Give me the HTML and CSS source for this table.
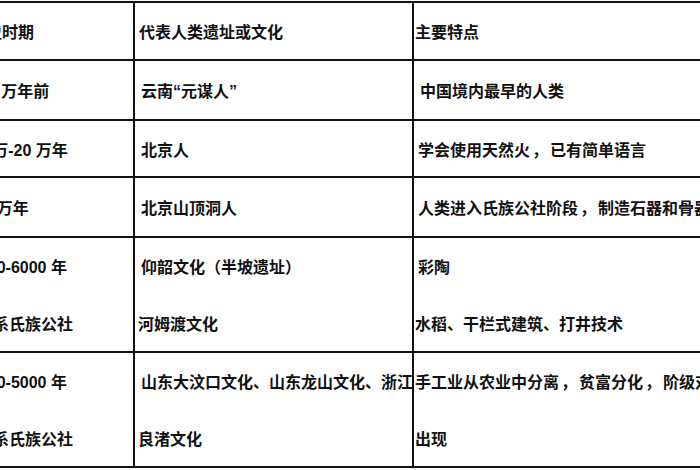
FILE: index.html
```html
<!DOCTYPE html>
<html lang="zh-CN">
<head>
<meta charset="utf-8">
<title>中国史前文化</title>
<link rel="stylesheet" href="styles.css">
</head>
<body>
<div class="sheet">
  <div class="cell c1">历史时期</div>
  <div class="cell c2 head">代表人类遗址或文化</div>
  <div class="cell c3 head">主要特点</div>

  <div class="cell c1">170 万年前</div>
  <div class="cell c2">云南“元谋人”</div>
  <div class="cell c3 wide">中国境内最早的人类</div>

  <div class="cell c1">70 万-20 万年</div>
  <div class="cell c2">北京人</div>
  <div class="cell c3">学会使用天然火<span class="comma">，</span>已有简单语言</div>

  <div class="cell c1">1.8 万年</div>
  <div class="cell c2">北京山顶洞人</div>
  <div class="cell c3">人类进入氏族公社阶段<span class="comma">，</span>制造石器和骨器</div>

  <div class="cell c1 two"><span class="ln">7000-6000 年</span><span class="ln indent">母系氏族公社</span></div>
  <div class="cell c2 two"><span class="ln">仰韶文化（半坡遗址）</span><span class="ln tight">河姆渡文化</span></div>
  <div class="cell c3 two"><span class="ln">彩陶</span><span class="ln tight">水稻、干栏式建筑、打井技术</span></div>

  <div class="cell c1 two"><span class="ln">6000-5000 年</span><span class="ln indent">父系氏族公社</span></div>
  <div class="cell c2 two"><span class="ln">山东大汶口文化、山东龙山文化、浙江</span><span class="ln tight">良渚文化</span></div>
  <div class="cell c3 two"><span class="ln tight">手工业从农业中分离<span class="comma">，</span>贫富分化<span class="comma">，</span>阶级对立</span><span class="ln tight">出现</span></div>
</div>
</body>
</html>
```

FILE: styles.css
```css
html, body {
  margin: 0;
  padding: 0;
  background: #fff;
  overflow: hidden;
}

body {
  width: 700px;
  height: 470px;
  font-family: "Liberation Sans", "Noto Sans CJK SC", sans-serif;
  font-weight: bold;
  font-size: 16px;
  color: #111;
}

.sheet {
  display: grid;
  grid-template-columns: 171px 277px 420px;
  grid-template-rows: 56px 58px 55px 58px 113px 113px;
  gap: 2px;
  padding: 2px;
  background: #111;
  margin: 1px 0 0 -40px;
  width: max-content;
}

.cell {
  background: #fff;
  display: flex;
  align-items: center;
  white-space: nowrap;
  overflow: hidden;
}

.c1 { padding-left: 8px; }
.c2 { padding-left: 6px; }
.c3 { padding-left: 4px; }
.head.c2 { padding-left: 4px; }
.head.c3 { padding-left: 1px; }
.wide { padding-left: 6px; }

.comma {
  padding: 0 2px;
}

.two {
  flex-direction: column;
  align-items: stretch;
}

.ln {
  flex: 1;
  display: flex;
  align-items: center;
}

.c1 .indent { margin-left: 7px; }
.c2 .tight { margin-left: -3px; }
.c3 .tight { margin-left: -3px; }
```
